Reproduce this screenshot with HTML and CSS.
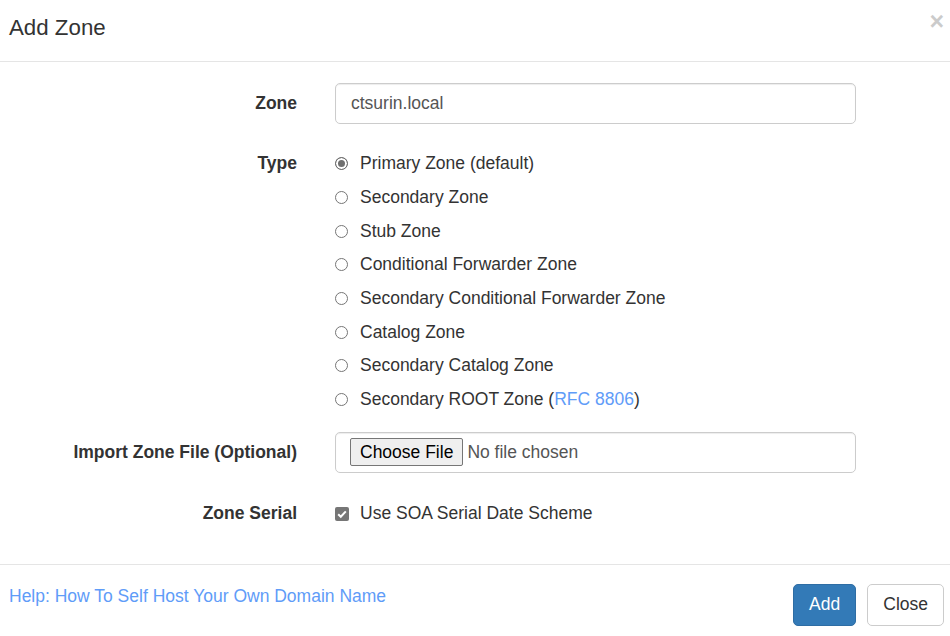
FILE: index.html
```html
<!DOCTYPE html>
<html>
<head>
<meta charset="utf-8">
<link rel="stylesheet" href="styles.css">
</head>
<body>
<div class="modal">
  <div class="modal-header">
    <h4 class="modal-title">Add Zone</h4>
    <button class="close" type="button">&times;</button>
  </div>
  <div class="modal-body">
    <div class="form-row row-input">
      <label class="control-label">Zone</label>
      <div class="control"><input class="form-control" type="text" value="ctsurin.local"></div>
    </div>
    <div class="form-row row-type">
      <label class="control-label type-label">Type</label>
      <div class="control radio-list">
        <label class="radio"><input type="radio" name="t" checked><span>Primary Zone (default)</span></label>
        <label class="radio"><input type="radio" name="t"><span>Secondary Zone</span></label>
        <label class="radio"><input type="radio" name="t"><span>Stub Zone</span></label>
        <label class="radio"><input type="radio" name="t"><span>Conditional Forwarder Zone</span></label>
        <label class="radio"><input type="radio" name="t"><span>Secondary Conditional Forwarder Zone</span></label>
        <label class="radio"><input type="radio" name="t"><span>Catalog Zone</span></label>
        <label class="radio"><input type="radio" name="t"><span>Secondary Catalog Zone</span></label>
        <label class="radio"><input type="radio" name="t"><span>Secondary ROOT Zone (<a href="#" class="link">RFC 8806</a>)</span></label>
      </div>
    </div>
    <div class="form-row row-file">
      <label class="control-label">Import Zone File (Optional)</label>
      <div class="control"><div class="form-control file-box"><span class="file-btn">Choose File</span><span class="file-text">No file chosen</span></div></div>
    </div>
    <div class="form-row row-serial">
      <label class="control-label">Zone Serial</label>
      <div class="control"><label class="radio"><input type="checkbox" class="check" checked><span>Use SOA Serial Date Scheme</span></label></div>
    </div>
  </div>
  <div class="modal-footer">
    <a href="#" class="link help">Help: How To Self Host Your Own Domain Name</a>
    <div class="buttons">
      <button class="btn btn-primary" type="button">Add</button>
      <button class="btn btn-default" type="button">Close</button>
    </div>
  </div>
</div>
</body>
</html>
```

FILE: styles.css
```css
* { box-sizing: border-box; }
html, body { margin: 0; padding: 0; background: #fff; }
body {
  font-family: "Liberation Sans", Arial, sans-serif;
  font-size: 17.5px;
  color: #333;
  width: 950px;
  height: 636px;
  overflow: hidden;
}
.modal { position: relative; width: 950px; }
.modal-header {
  height: 62px;
  padding: 12px 9px 0 9px;
  border-bottom: 1px solid #e5e5e5;
}
.modal-title {
  margin: 0;
  font-size: 22.3px;
  font-weight: normal;
  line-height: 31px;
  color: #333;
}
.close {
  position: absolute;
  top: 6px;
  right: 6px;
  border: 0;
  background: transparent;
  padding: 0;
  font-family: "Liberation Sans", Arial, sans-serif;
  font-size: 25px;
  font-weight: bold;
  line-height: 30px;
  color: #000;
  opacity: 0.2;
}
.modal-body { padding: 21px 0 33px 0; }
.form-row {
  display: grid;
  grid-template-columns: 297px 521px;
  column-gap: 38px;
}
.control-label {
  font-weight: bold;
  text-align: right;
  display: flex;
  align-items: center;
  justify-content: flex-end;
}
.row-type { margin-top: 23px; }
.row-type .type-label { align-self: start; height: 33.7px; }
.row-file { margin-top: 15.4px; }
.row-serial { margin-top: 24px; }
.form-control {
  display: block;
  width: 521px;
  height: 41px;
  padding: 0 15px;
  border: 1px solid #ccc;
  border-radius: 5px;
  font-family: "Liberation Sans", Arial, sans-serif;
  font-size: 17.5px;
  color: #555;
  background: #fff;
  box-shadow: inset 0 1px 1px rgba(0,0,0,0.075);
  outline: none;
}
.radio-list { display: flex; flex-direction: column; }
.radio {
  display: flex;
  align-items: center;
  height: 33.7px;
  font-weight: normal;
  color: #333;
}
.radio input {
  -webkit-appearance: none;
  appearance: none;
  width: 13px;
  height: 13px;
  margin: 0 12px 0 0;
  border: 1px solid #767676;
  border-radius: 50%;
  background: #fff;
  flex: none;
}
.radio input[type="radio"]:checked {
  border-color: #6a6a6a;
  background: #6f6f6f;
  box-shadow: inset 0 0 0 2px #fff;
}
.radio input.check {
  width: 14px;
  height: 14px;
  border-radius: 2px;
  border: 0;
  margin-right: 11px;
  background-color: #767676;
  background-image: url("data:image/svg+xml,%3Csvg xmlns='http://www.w3.org/2000/svg' viewBox='0 0 14 14'%3E%3Cpath d='M3.2 7.2l2.6 2.6 5-5.4' fill='none' stroke='%23fff' stroke-width='2'/%3E%3C/svg%3E");
  background-size: 14px 14px;
}
.link { color: #5f9cf8; text-decoration: none; }
.file-box { display: flex; align-items: center; padding: 0 0 0 14px; }
.file-btn {
  display: inline-flex;
  align-items: center;
  height: 28px;
  padding: 0 9px;
  border: 1px solid #767676;
  border-radius: 2px;
  background: #efefef;
  color: #000;
  margin-right: 4px;
}
.file-text { color: #555; }
.modal-footer {
  border-top: 1px solid #e5e5e5;
  padding: 19px 6px 0 9px;
  display: flex;
  justify-content: space-between;
  align-items: flex-start;
}
.help { line-height: 24px; }
.buttons { display: flex; gap: 11px; }
.btn {
  height: 42px;
  padding: 0 15px;
  border: 1px solid transparent;
  border-radius: 5px;
  font-family: "Liberation Sans", Arial, sans-serif;
  font-size: 17.5px;
  line-height: 1;
}
.btn-primary { background: #337ab7; border-color: #2e6da4; color: #fff; }
.btn-default { background: #fff; border-color: #ccc; color: #333; }
```
